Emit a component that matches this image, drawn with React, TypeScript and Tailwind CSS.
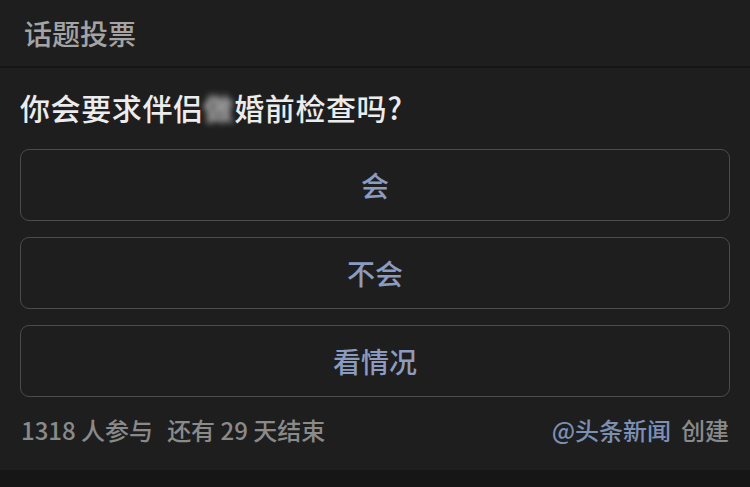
import React from "react";

export default function App() {
  const options = ["会", "不会", "看情况"];
  return (
    <div
      className="w-[750px] h-[487px] bg-[#1e1e1e] flex flex-col overflow-hidden"
      style={{ fontFamily: '"Noto Sans CJK SC", "Noto Sans", sans-serif' }}
    >
      <div className="h-[66px] px-[24px] flex items-center text-[28px] font-medium leading-none text-[#a4a4a4]">
        话题投票
      </div>
      <div className="h-[2px] bg-[#151515]" />
      <div className="px-[20px] pt-[19px] text-[30px] font-medium tracking-[0.6px] leading-[40px] text-[#ececec]">
        你会要求伴侣<span className="blur-[3px] text-[#d4d4d4]">做</span>婚前检查吗?
      </div>
      <div className="px-[20px] mt-[22px] flex flex-col gap-[16px]">
        {options.map((o) => (
          <div
            key={o}
            className="h-[72px] rounded-[9px] border border-[#4b4b4b] flex items-center justify-center text-[28px] font-medium text-[#8b9cc0]"
          >
            {o}
          </div>
        ))}
      </div>
      <div className="h-[73px] pb-[7px] px-[21px] flex items-center justify-between text-[24px] font-medium text-[#8a8a8a]">
        <div className="flex items-center">
          <span>1318 人参与</span>
          <span className="ml-[14px]">还有 29 天结束</span>
        </div>
        <div className="flex items-center">
          <span className="text-[#7c90b6]">@头条新闻</span>
          <span className="ml-[10px]">创建</span>
        </div>
      </div>
      <div className="flex-1 bg-[#161616]" />
    </div>
  );
}
